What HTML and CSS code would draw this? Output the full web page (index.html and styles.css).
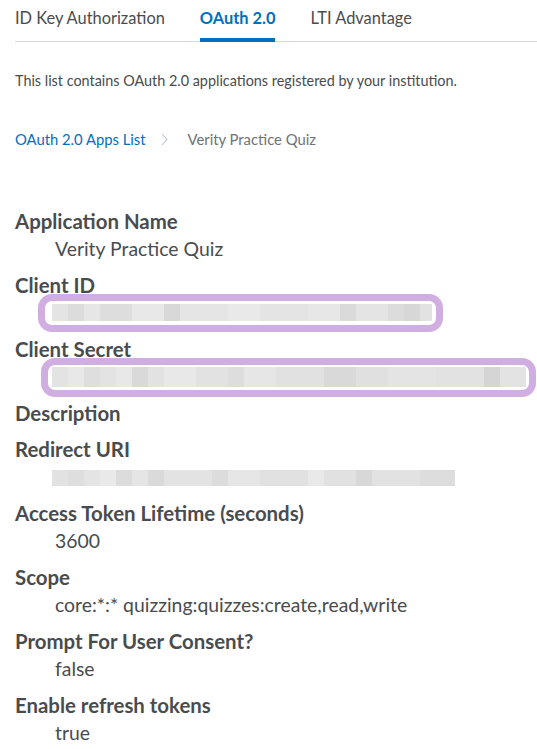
FILE: index.html
```html
<!DOCTYPE html>
<html lang="en">
<head>
<meta charset="utf-8">
<title>OAuth 2.0 App</title>
<link rel="stylesheet" href="styles.css">
</head>
<body>
<div class="page">
  <nav class="tabs">
    <span class="tab">ID Key Authorization</span>
    <span class="tab active">OAuth 2.0</span>
    <span class="tab">LTI Advantage</span>
  </nav>
  <p class="intro">This list contains OAuth 2.0 applications registered by your institution.</p>
  <div class="crumbs">
    <a class="crumb-link">OAuth 2.0 Apps List</a>
    <svg class="chev" width="7" height="13" viewBox="0 0 7 13"><polyline points="1,1 6,6.5 1,12" fill="none" stroke="#bcc3cb" stroke-width="1.1"/></svg>
    <span class="crumb-current">Verity Practice Quiz</span>
  </div>
  <dl class="fields">
    <div class="field"><dt>Application Name</dt><dd>Verity Practice Quiz</dd></div>
    <div class="field"><dt>Client ID</dt><dd><span class="redact redact-id marked"></span></dd></div>
    <div class="field"><dt>Client Secret</dt><dd><span class="redact redact-secret marked"></span></dd></div>
    <div class="field"><dt>Description</dt></div>
    <div class="field"><dt>Redirect URI</dt><dd><span class="redact redact-uri"></span></dd></div>
    <div class="field"><dt>Access Token Lifetime (seconds)</dt><dd>3600</dd></div>
    <div class="field"><dt>Scope</dt><dd>core:*:* quizzing:quizzes:create,read,write</dd></div>
    <div class="field"><dt>Prompt For User Consent?</dt><dd>false</dd></div>
    <div class="field"><dt>Enable refresh tokens</dt><dd>true</dd></div>
  </dl>
</div>
</body>
</html>
```

FILE: styles.css
```css
html, body {
  margin: 0;
  padding: 0;
  background: #ffffff;
}
body {
  font-family: Lato, "Open Sans", sans-serif;
  color: #494c4e;
  overflow: hidden;
}
.page {
  padding-left: 15px;
}
.tabs {
  display: flex;
  gap: 35px;
  border-bottom: 1px solid #d3d9e3;
  height: 41px;
}
.tab {
  position: relative;
  font-size: 16.4px;
  line-height: 20px;
  padding-top: 8px;
  color: #494c4e;
  white-space: nowrap;
}
.tab.active {
  color: #006fbf;
  font-weight: 700;
}
.tab.active::after {
  content: "";
  position: absolute;
  left: 0;
  right: 0;
  bottom: -1px;
  height: 4px;
  background: #006fbf;
}
.intro {
  margin: 29px 0 0;
  font-size: 14.4px;
  line-height: 20px;
}
.crumbs {
  margin-top: 38px;
  display: flex;
  align-items: center;
  height: 20px;
  font-size: 14.8px;
}
.crumb-link {
  color: #006fbf;
}
.chev {
  margin-left: 15px;
  margin-right: 20px;
}
.crumb-current {
  color: #6e7376;
}
.fields {
  margin: 58px 0 0;
}
.field {
  margin-bottom: 8px;
}
.field dt {
  font-size: 20.4px;
  font-weight: 700;
  line-height: 28px;
}
.field dd {
  margin: 0 0 0 40px;
  font-size: 19.4px;
  line-height: 28px;
  height: 28px;
  display: flex;
  align-items: center;
}
.redact {
  display: block;
  position: relative;
  margin-left: -3px;
}
.redact-id {
  width: 380px;
  height: 17px;
  margin-top: -1px;
  background: linear-gradient(90deg,
    #e4e4e4 0 16px, #dcdcdc 16px 32px, #e6e6e6 32px 48px, #dddddd 48px 80px,
    #e8e8e8 80px 112px, #d8d8d8 112px 128px, #e5e5e5 128px 176px, #e9e9e9 176px 208px,
    #e4e4e4 208px 256px, #e7e7e7 256px 288px, #dadada 288px 304px, #e4e4e4 304px 336px,
    #dcdcdc 336px 352px, #d7d7d7 352px 368px, #e2e2e2 368px 380px);
}
.redact-secret {
  width: 474px;
  height: 20px;
  background: linear-gradient(90deg,
    #e3e3e3 0 16px, #e8e8e8 16px 32px, #dedede 32px 48px, #e3e3e3 48px 64px,
    #e8e8e8 64px 80px, #d9d9d9 80px 96px, #e2e2e2 96px 112px, #e8e8e8 112px 144px,
    #e2e2e2 144px 176px, #dddddd 176px 192px, #e6e6e6 192px 224px, #e1e1e1 224px 272px,
    #d9d9d9 272px 304px, #e0e0e0 304px 336px, #e4e4e4 336px 384px, #e2e2e2 384px 432px,
    #d5d5d5 432px 448px, #e3e3e3 448px 474px);
}
.redact-uri {
  width: 403px;
  height: 16px;
  margin-top: 2px;
  background: linear-gradient(90deg,
    #e2e2e2 0 16px, #dedede 16px 32px, #e4e4e4 32px 48px, #e9e9e9 48px 64px,
    #dcdcdc 64px 80px, #e5e5e5 80px 96px, #dadada 96px 112px, #e3e3e3 112px 160px,
    #dcdcdc 160px 176px, #e6e6e6 176px 208px, #e1e1e1 208px 256px, #e9e9e9 256px 272px,
    #e1e1e1 272px 304px, #d8d8d8 304px 320px, #e2e2e2 320px 368px, #dddddd 368px 403px);
}
.marked::before {
  content: "";
  position: absolute;
  border: 7px solid #d1aee2;
  border-radius: 14px;
  pointer-events: none;
}
.redact-id.marked::before {
  top: -10px;
  bottom: -11px;
  left: -14px;
  right: -11px;
}
.redact-secret.marked::before {
  top: -9px;
  bottom: -10px;
  left: -11px;
  right: -10px;
}
```
